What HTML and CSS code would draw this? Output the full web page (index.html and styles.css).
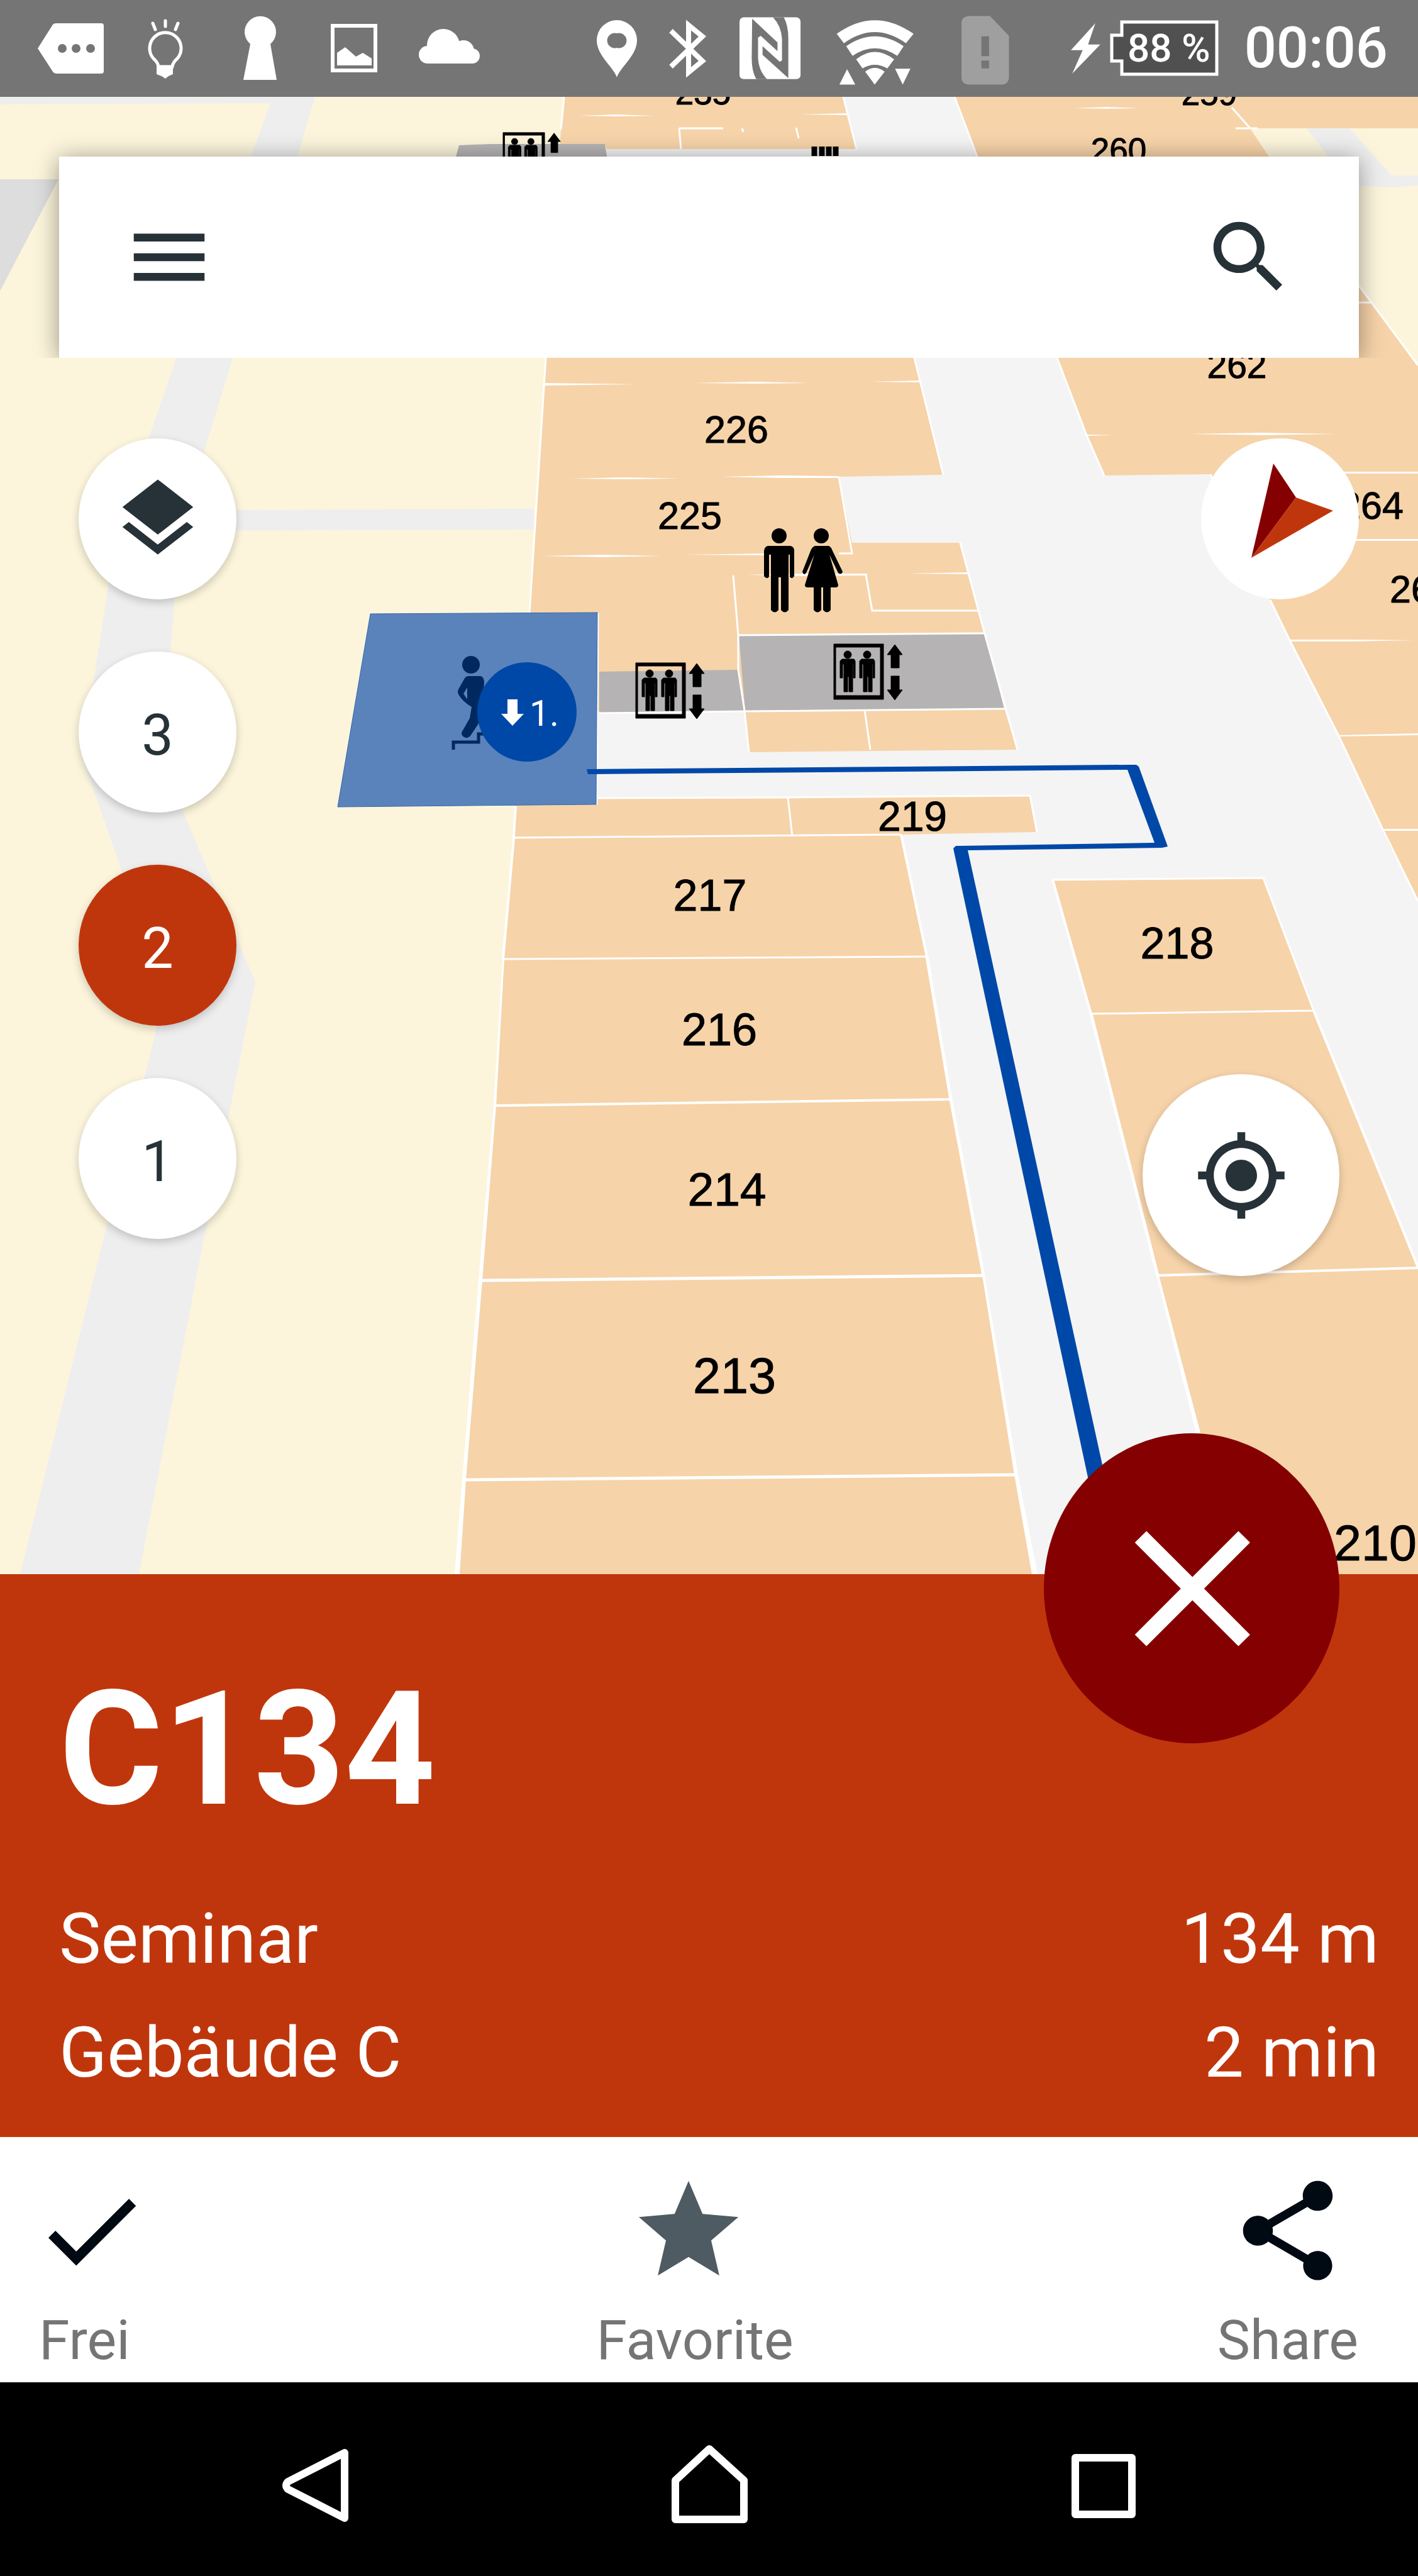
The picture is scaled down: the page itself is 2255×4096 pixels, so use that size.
FILE: index.html
```html
<!DOCTYPE html>
<html lang="de">
<head>
<meta charset="utf-8">
<meta name="viewport" content="width=device-width, initial-scale=1">
<title>Raum C134</title>
<link rel="stylesheet" href="styles.css">
</head>
<body>
<header class="status">
  <div class="status-group">
    <svg viewBox="38 0 150 154" width="150" height="154"><path fill="#fff" d="M60 77L84 39Q86 37 89 37H161Q165 37 165 41V113Q165 117 161 117H89Q86 117 84 114Z"/><g fill="#757575"><circle cx="99" cy="77" r="7"/><circle cx="121" cy="77" r="7"/><circle cx="144" cy="77" r="7"/></g></svg>
    <svg viewBox="188 0 150 154" width="150" height="154"><path fill="none" stroke="#fff" stroke-width="5" d="M252 106Q251 99 244 93A25 25 0 1 1 282 93Q275 99 274 106Z"/><path fill="#fff" d="M249 104H275V118L268 121L263 125L257 121L249 118Z"/><path stroke="#fff" stroke-width="5" stroke-linecap="round" d="M263 33V42M243 37L247 47M283 37L279 47"/></svg>
    <svg viewBox="338 0 150 154" width="150" height="154"><path fill="#fff" d="M398 70A25 25 0 1 1 430 70L440 127H387Z"/></svg>
    <svg viewBox="488 0 150 154" width="150" height="154"><rect x="529" y="41" width="68" height="71" fill="none" stroke="#fff" stroke-width="6"/><path fill="#fff" d="M536 84L549 75L566 90L577 84L591 93V104H536Z"/></svg>
    <svg viewBox="638 0 150 154" width="150" height="154"><g fill="#fff"><circle cx="705" cy="72" r="26"/><circle cx="737" cy="81" r="17"/><circle cx="680" cy="87" r="14"/><circle cx="751" cy="89" r="12"/><path d="M680 78H751V101H680Z"/></g></svg>
  </div>
  <div class="status-group">
    <svg viewBox="926 0 112 154" width="112" height="154"><path fill="#fff" fill-rule="evenodd" d="M982 123C976 106 950 88 950 64A32 32 0 0 1 1014 64C1014 88 988 106 982 123ZM982 53A12 12 0 1 0 982 76A12 12 0 1 0 982 53Z"/></svg>
    <svg viewBox="1038 0 112 154" width="112" height="154"><path fill="none" stroke="#fff" stroke-width="8" d="M1068 49L1118 97L1096 115V40L1118 58L1068 106"/></svg>
    <svg viewBox="1150 0 151 154" width="151" height="154"><g transform="translate(1127.4 0) scale(.719 .393)"><path fill="#fff" d="M78 70H195Q204 72 204 90V302Q204 318 195 320H78Q69 318 69 302V90Q69 72 78 70Z"/><path fill="#757575" d="M97 76L153 172V207L116 145L110 152V235Q112 290 130 320H106Q96 290 96 235ZM177 316L120 222V187L158 250L163 244V157Q161 104 143 70H167Q177 104 177 157Z"/></g></svg>
    <svg viewBox="1301 0 184 154" width="184" height="154"><path transform="translate(1127.4 0) scale(.719 .393)" fill="#fff" d="M284 137Q368 27 454 137L437 175Q368 85 300 175ZM305 187Q368 107 432 187L418 226Q368 164 319 226ZM327 240Q368 180 411 240L396 277Q368 247 341 277ZM347 290Q368 260 390 290L368 342ZM307 280L325 342H290ZM413 278H447L430 342Z"/></svg>
    <svg viewBox="1485 0 166 154" width="166" height="154"><g transform="translate(1127.4 0) scale(.719 .393)"><path fill="#9f9f9f" d="M575 65H623L665 145V318Q662 342 650 342H575Q562 340 560 318V89Q562 67 575 65Z"/><path fill="#757575" d="M604 147H621V227H604ZM604 245H621V277H604Z"/></g></svg>
    <svg viewBox="1651 0 109 154" width="109" height="154"><path transform="translate(1127.4 0) scale(.719 .393)" fill="#fff" d="M856 94L802 203H828L805 298L867 180H840Z"/></svg>
    <svg viewBox="1760 0 186 154" width="186" height="154"><path fill="#505050" stroke="#fff" stroke-width="5" d="M1785 35H1936V118H1785V97H1769V56H1785Z"/><text class="battery" x="1794" y="98">88 %</text></svg>
    <time class="clock">00:06</time>
  </div>
</header>

<main class="map">
  <svg class="plan" viewBox="0 154 2255 2349" preserveAspectRatio="xMidYMax slice">
    <defs>
      <symbol id="lift" viewBox="-1 -1 112 92">
        <g stroke="#000" stroke-width="1">
        <path fill-rule="evenodd" d="M0 0H79V88H0ZM3 5V82H74V5Z"/>
        <g id="rider"><circle cx="22" cy="17" r="6"/><path d="M13 24H32L34 27V54H31V32H30V76H24V52H22V76H16V32H14V54H10V27Z"/></g>
        <use href="#rider" x="31"/>
        <path d="M97 1L109 17H104V38H91V17H85ZM91 51H104V73H109L97 89L85 73H91Z"/>
        </g>
      </symbol>
    </defs>
    <rect y="154" width="2255" height="2349" fill="#fcf5dc"/>
    <g class="road">
      <path d="M0 154H501L473 249L370 570L324 720L290 832L278 952L258 1200L291 1290L345 1418L406 1561L363 1779L327 1956L221 2503H32L169 1952L229 1716L262 1580L194 1386L131 1205L150 1075L173 927L185 847L237 695L280 570L399 249L430 164L0 166Z"/>
      <path d="M280 811L849 809V842L280 844Z"/>
    </g>
    <path fill="#ddd" d="M0 285H93L0 463Z"/>

    <path class="hall" d="M965 154H1520L1681 569L1756 756L1925 754L2255 1433V2503H728L820 1282H942V975H868L965 300Z"/>

    <g class="room">
      <path d="M897 154H1341L1362 237H965L962 230H890Z"/>
      <path d="M1518 154H2255V204H1988L2018 249L2161 454L2181 481L2255 581V1433L2209 1344L2129 1170L2051 1018L2020 954L1925 754L1756 756L1728 692L1681 569L1554 249Z"/>
      <path d="M868 569H1454L1500 755L1334 758L1355 863H1527L1541 911L1566 1008L1597 1127L1618 1192L1191 1196L1185 1131H949V975H842Z"/>
      <path d="M820 1269H948L1638 1265L1649 1323L1433 1327L1474 1521L1512 1748L1564 2028L1616 2345L1646 2503H728L738 2353L764 2036L787 1758L800 1525Z"/>
      <path d="M1674 1399L2009 1396L2089 1607L2255 2015V2503H1964L1906 2278L1841 2028L1735 1612Z"/>
    </g>
    <path fill="#fcf5dc" d="M1988 204H2255V581L2181 481L2161 454L2018 249Z"/>
    <path class="road" d="M2078 204H2146L2213 279H2255V295L2213 298L2150 295L2112 249Z"/>
    <path fill="#b5b3b4" d="M730 231L778 229H962L967 260H722ZM953 1068L1174 1065L1184 1130L953 1133ZM1175 1010L1566 1008L1597 1127L1185 1130Z"/>

    <g class="wall">
      <path d="M897 154L892 206M868 569L842 975M1341 154L1362 237M1518 154L1554 249M1454 569L1500 755M1334 758L1355 880H1334M1527 863L1566 1008L1618 1192M1681 569L1728 692L1756 756M2020 954L2051 1018L2129 1170L2199 1319L2255 1433"/>
      <path d="M1166 915L1174 1010V1065L1184 1130L1191 1196M1377 914L1387 971H1557M1375 1129L1384 1192M1253 1268L1260 1330M951 975L949 1279"/>
      <path d="M953 1134L1185 1131L1597 1127M1175 1010L1566 1007M948 1269L1253 1268L1638 1265L1649 1323M817 1332L1433 1327M800 1525L1474 1521M1674 1399L2009 1396L2089 1607M1735 1612L2089 1607M1959 171L1988 204M1925 754L1935 776M1080 204L1083 237M1080 204H1150M1180 204L1182 210M1266 203L1270 220M2161 481H2181M1965 204H2000M2161 454L2181 481L2255 581"/>
    </g>
    <g class="wall wall-mid">
      <path d="M787 1758L1512 1748M1841 2028L2255 2016M1433 1327L1474 1521M1735 1612L1674 1399M2089 1607L2255 2015M820 1282L816 1344L800 1525"/>
    </g>
    <g class="wall wall-near">
      <path d="M764 2036L1564 2028M738 2353L1616 2345M1474 1521L1512 1748L1564 2028M1735 1612L1841 2028"/>
    </g>
    <path fill="#fff" d="M799 1525L785 1758L761 2036L735 2353L723 2503H731L741 2353L767 2036L789 1758L802 1525ZM1562 2028L1613 2345L1641 2503H1650L1619 2345L1566 2028ZM1839 2028L1902 2278L1960 2503H1968L1909 2278L1843 2028Z"/>
    <path fill="#fff" d="M866 609L940 610L1014 611L940 612L866 613ZM1100 609L1200 607L1289 609L1200 610ZM1383 607L1463 605V608ZM906 761L994 759L1082 761L994 762ZM1145 758L1240 756L1334 757V760L1240 760ZM863 884L958 882L1053 884L958 886ZM1085 882L1224 880V883ZM1185 914L1280 912L1379 912V915L1280 916ZM1440 912L1542 910V913ZM1728 691L1771 692L1728 693ZM1890 690L2008 688L2127 690L2008 692ZM2138 750H2255V753H2138ZM2150 857H2255V860H2150ZM2051 1017L2150 1017L2250 1018L2150 1020L2051 1020ZM2129 1169L2255 1166V1169L2129 1171ZM2199 1318H2255V1321H2199ZM1708 172L1760 170L1812 172L1760 173ZM1267 182L1350 180V183ZM920 184L980 182L1042 184L980 185Z"/>

    <path fill="#5a83bb" stroke="#3568af" stroke-width="1" d="M589 976L950 974L948 1279L537 1283Z"/>
    <path fill="#0048a8" d="M933 1223L1795 1216L1807 1216L1811 1219L1857 1346L1848 1348L1539 1352L1753 2329L1768 2400H1741L1730 2349L1516 1349L1520 1345L1836 1340L1793 1224L935 1231Z"/>

    <g fill="#00295f">
      <circle cx="749" cy="1057" r="14"/>
      <path d="M744 1075H764Q770 1076 770 1086L768 1110V1120Q766 1142 760 1152L748 1170Q744 1175 738 1172Q732 1168 735 1163L747 1142L750 1124Q736 1116 729 1104Q727 1100 729 1096L738 1080Q740 1076 744 1075ZM743 1093L737 1103L743 1112Z"/>
      <path fill="none" stroke="#00295f" stroke-width="5" d="M721 1192V1180H761V1167H780"/>
    </g>
    <circle cx="838" cy="1132" r="79" fill="#0048a8"/>
    <path fill="#fff" d="M807 1112H823V1135H833L815 1154L797 1135H807Z"/>
    <text class="step" x="842" y="1154">1.</text>

    <use href="#lift" x="1010" y="1053" width="112" height="92"/>
    <use href="#lift" x="1325" y="1023" width="112" height="92"/>
    <use href="#lift" x="799" y="210" width="94" height="77"/>
    <circle cx="1239" cy="852" r="12"/>
    <path d="M1221 868H1257Q1263 869 1263 876V916Q1260 922 1256 917V882H1254V970Q1248 977 1242 970V918H1238V970Q1232 977 1226 970V882H1223V917Q1219 922 1215 916V876Q1216 869 1221 868Z"/>
    <circle cx="1306" cy="852" r="12"/>
    <path d="M1296 868H1318Q1322 870 1324 876L1340 909Q1338 915 1333 911L1319 882L1333 930Q1333 934 1329 934H1321V970Q1315 977 1309 970V934H1306V970Q1300 977 1294 970V934H1284Q1280 934 1280 930L1295 882L1282 911Q1278 916 1276 909L1289 876Q1291 870 1296 868Z"/>
    <path stroke="#000" stroke-width="9" d="M1295 233V248M1307 233V248M1318 233V248M1329 233V248"/>

    <g class="label">
      <text x="1118" y="166" font-size="53">235</text>
      <text x="1923" y="167" font-size="53">259</text>
      <text x="1779" y="257" font-size="53">260</text>
      <text x="1967" y="601" font-size="57">262</text>
      <text x="1171" y="704" font-size="61">226</text>
      <text x="1097" y="841" font-size="61">225</text>
      <text x="2181" y="825" font-size="61">264</text>
      <text x="2261" y="958" font-size="61">265</text>
      <text x="1451" y="1321" font-size="66">219</text>
      <text x="1129" y="1448" font-size="70">217</text>
      <text x="1872" y="1524" font-size="70">218</text>
      <text x="1144" y="1662" font-size="72">216</text>
      <text x="1156" y="1917" font-size="75">214</text>
      <text x="1168" y="2215" font-size="79">213</text>
      <text x="2187" y="2481" font-size="79">210</text>
    </g>
  </svg>

  <form class="search">
    <button type="button" class="icon-button" aria-label="Menü"><svg viewBox="0 0 24 24" width="150" height="150"><path d="M3 18h18v-2H3v2zm0-5h18v-2H3v2zm0-7v2h18V6H3z"/></svg></button>
    <input class="search-field" type="text" aria-label="Suche">
    <button type="submit" class="icon-button" aria-label="Suchen"><svg viewBox="0 0 24 24" width="150" height="150"><path d="M15.500 14h-.79l-.28-.27C15.410 12.590 16 11.110 16 9.500 16 5.910 13.090 3 9.500 3S3 5.910 3 9.500 5.910 16 9.500 16c1.610 0 3.090-.59 4.230-1.570l.27.28v.79l5 4.990L20.490 19l-4.990-5zm-6 0C7.010 14 5 11.990 5 9.500S7.010 5 9.500 5 14 7.010 14 9.500 11.990 14 9.500 14z"/></svg></button>
  </form>

  <div class="controls">
    <div class="floors">
      <button class="round" aria-label="Ebenen"><svg viewBox="0 0 24 24" width="150" height="150"><path d="M11.990 18.540l-7.370-5.730L3 14.070l9 7 9-7-1.630-1.270-7.380 5.740zM12 16l7.360-5.730L21 9l-9-7-9 7 1.630 1.270L12 16z"/></svg></button>
      <button class="round round-floor">3</button>
      <button class="round round-floor round-active">2</button>
      <button class="round round-floor">1</button>
    </div>
    <div class="view-tools">
      <button class="round round-flat" aria-label="Kompass"><svg viewBox="0 0 251 256" width="251" height="256"><path fill="#850000" d="M115 40L151 94L80 190Z"/><path fill="#c0360c" d="M151 94L210 115L80 190Z"/></svg></button>
      <button class="round round-large" aria-label="Mein Standort"><svg viewBox="0 0 24 24" width="150" height="150"><path d="M12 8c-2.210 0-4 1.790-4 4s1.790 4 4 4 4-1.790 4-4-1.790-4-4-4zm8.940 3c-.46-4.170-3.770-7.480-7.940-7.940V1h-2v2.060C6.830 3.520 3.520 6.830 3.060 11H1v2h2.060c.46 4.170 3.770 7.480 7.940 7.940V23h2v-2.060c4.170-.46 7.480-3.770 7.940-7.940H23v-2h-2.060zM12 19c-3.870 0-7-3.130-7-7s3.130-7 7-7 7 3.130 7 7-3.130 7-7 7z"/></svg></button>
    </div>
  </div>
</main>

<section class="panel">
  <button class="close" aria-label="Schließen"><svg viewBox="0 0 24 24" width="314" height="316"><path d="M19.100 6.410L17.690 5 12.100 10.590 6.510 5 5.100 6.410 10.690 12 5.100 17.590 6.510 19 12.100 13.410 17.690 19 19.100 17.590 13.510 12z"/></svg></button>
  <h1 class="title">C134</h1>
  <p class="fact"><span>Seminar</span><span>134 m</span></p>
  <p class="fact"><span>Gebäude C</span><span>2 min</span></p>
</section>

<div class="actions">
  <button class="action action-start"><svg viewBox="0 0 24 24" width="190" height="190"><path d="M9 16.170L4.830 12l-1.420 1.410L9 19 21 7l-1.410-1.410z"/></svg><span>Frei</span></button>
  <button class="action action-middle"><svg viewBox="0 0 24 24" width="190" height="190"><path d="M12 17.270L18.180 21l-1.640-7.030L22 9.240l-7.190-.61L12 2 9.190 8.630 2 9.240l5.460 4.730L5.820 21z"/></svg><span>Favorite</span></button>
  <button class="action action-end"><svg viewBox="0 0 24 24" width="190" height="190"><path d="M18 16.080c-.76 0-1.440.3-1.960.77L8.910 12.700c.05-.23.09-.46.09-.7s-.04-.47-.09-.7l7.050-4.110c.54.5 1.250.81 2.040.81 1.660 0 3-1.340 3-3s-1.340-3-3-3-3 1.340-3 3c0 .24.04.47.09.7L8.040 9.810C7.500 9.310 6.790 9 6 9c-1.660 0-3 1.340-3 3s1.340 3 3 3c.79 0 1.500-.31 2.040-.81l7.120 4.160c-.05.21-.08.43-.08.65 0 1.610 1.310 2.920 2.920 2.920 1.610 0 2.920-1.310 2.920-2.920s-1.310-2.920-2.920-2.920z"/></svg><span>Share</span></button>
</div>

<nav class="system-nav">
  <button aria-label="Zurück"><svg viewBox="0 0 200 200" width="200" height="200"><path d="M148 58V162L58 116Q52 110 58 104Z"/></svg></button>
  <button aria-label="Startseite"><svg viewBox="0 0 200 200" width="200" height="200"><path d="M46 164V102L100 52L155 102V164Z"/></svg></button>
  <button aria-label="Übersicht"><svg viewBox="0 0 200 200" width="200" height="200"><path d="M55 66H145V156H55Z"/></svg></button>
</nav>
</body>
</html>
```
FILE: styles.css
```css
* {
  box-sizing: border-box;
}

body {
  margin: 0;
  min-height: 100vh;
  display: flex;
  flex-direction: column;
  background: #000;
  font-family: Roboto, "Liberation Sans", sans-serif;
}

button {
  margin: 0;
  padding: 0;
  border: 0;
  background: none;
  color: inherit;
  font: inherit;
}

svg {
  display: block;
  flex: none;
}

.status {
  display: flex;
  justify-content: space-between;
  padding: 0 48px 0 38px;
  background: #757575;
  color: #fff;
}

.status-group {
  display: flex;
  align-items: center;
}

.battery {
  fill: #fff;
  font-size: 62px;
  font-weight: 500;
}

.clock {
  margin-left: 34px;
  font-size: 90px;
  font-weight: 500;
  line-height: 108px;
}

.map {
  position: relative;
  flex: 1 0 auto;
  display: flex;
  flex-direction: column;
  padding-top: 95px;
  overflow: hidden;
}

.plan {
  position: absolute;
  inset: 0;
  width: 100%;
  height: 100%;
}

.road {
  fill: #eee;
}

.hall {
  fill: #f4f4f4;
}

.room {
  fill: #f6d3a9;
}

.wall {
  fill: none;
  stroke: #fff;
  stroke-width: 3px;
}

.wall-mid {
  stroke-width: 4px;
}

.wall-near {
  stroke-width: 5px;
}

.label {
  font-family: "Liberation Sans", Arial, sans-serif;
  text-anchor: middle;
  stroke: #000;
  stroke-width: 1px;
}

.step {
  fill: #fff;
  font-size: 57px;
}

.search {
  position: relative;
  display: flex;
  align-items: center;
  height: 320px;
  margin: 0 94px;
  padding: 0 100px;
  background: #fff;
  box-shadow: 0 4px 36px rgba(0, 0, 0, 0.4);
  clip-path: inset(-60px -60px 0 -60px);
}

.icon-button {
  color: #263238;
  fill: currentColor;
}

.search-field {
  flex: 1;
  min-width: 0;
  height: 160px;
  border: 0;
  outline: 0;
  background: none;
  font: inherit;
  font-size: 90px;
}

.controls {
  position: relative;
  flex: 1;
  display: flex;
  justify-content: space-between;
  padding: 128px 94px 474px 125px;
}

.floors {
  display: flex;
  flex-direction: column;
  gap: 83px;
}

.view-tools {
  display: flex;
  flex-direction: column;
  justify-content: space-between;
  align-items: flex-end;
}

.round {
  display: flex;
  align-items: center;
  justify-content: center;
  width: 251px;
  height: 256px;
  border-radius: 50%;
  background: #fff;
  color: #263238;
  fill: currentColor;
  font-size: 90px;
  line-height: 106px;
  box-shadow: 0 5px 14px rgba(0, 0, 0, 0.2);
}

.round-floor {
  padding-top: 12px;
}

.round-active {
  background: #c0360c;
  color: #fff;
}

.round-flat {
  box-shadow: none;
}

.round-large {
  width: 313px;
  height: 321px;
  margin-right: 31px;
}

.panel {
  position: relative;
  padding: 129px 62px 44px 94px;
  background: #c0360c;
  color: #fff;
}

.close {
  position: absolute;
  top: -224px;
  right: 125px;
  display: flex;
  align-items: center;
  justify-content: center;
  width: 470px;
  height: 493px;
  border-radius: 50%;
  background: #850000;
  fill: #fff;
}

.title {
  margin: 0 0 60px;
  font-size: 252px;
  font-weight: 700;
  line-height: 300px;
}

.fact {
  display: flex;
  justify-content: space-between;
  margin: 0;
  font-size: 112px;
  line-height: 181px;
}

.actions {
  display: grid;
  grid-template-columns: 1fr auto 1fr;
  padding: 54px 95px 17px 50px;
  background: #fff;
  color: #757575;
  font-size: 88px;
  line-height: 100px;
}

.action {
  display: flex;
  flex-direction: column;
  align-items: center;
  gap: 29px;
  fill: #010a12;
}

.action-start {
  justify-self: start;
  align-items: flex-start;
}

.action-start span {
  padding-left: 12px;
}

.action-middle {
  fill: #4e5b63;
}

.action-middle svg {
  margin-right: 20px;
}

.action-end {
  justify-self: end;
}

.system-nav {
  display: flex;
  padding: 54px 186px;
  background: #000;
}

.system-nav button {
  flex: 1;
  display: flex;
  justify-content: center;
  fill: none;
  stroke: #fff;
  stroke-width: 12px;
  stroke-linejoin: round;
}
```
